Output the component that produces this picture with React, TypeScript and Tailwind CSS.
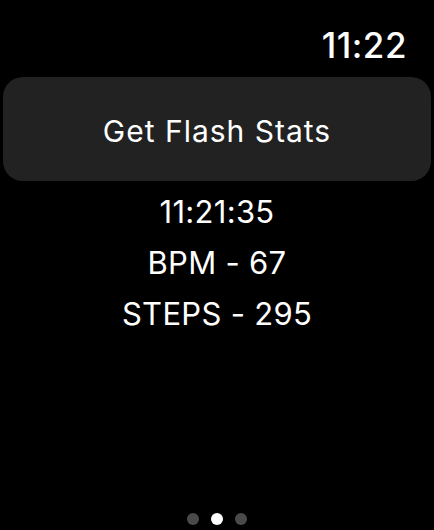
export default function App() {
  return (
    <div
      className="w-[434px] h-[530px] bg-black text-white flex flex-col overflow-hidden"
      style={{ fontFamily: "Inter, 'Noto Sans', sans-serif" }}
    >
      {/* Status bar */}
      <div className="flex justify-end pr-[27px] pt-[25px] h-[77px]">
        <span className="text-[35px] font-medium leading-[40px] tracking-[0.5px]">11:22</span>
      </div>

      {/* Action button */}
      <div className="px-[3px]">
        <button className="w-full h-[104px] rounded-[20px] bg-[#222222] text-[30px] leading-none tracking-[1px] text-white flex items-center justify-center pt-[3px]">
          Get Flash Stats
        </button>
      </div>

      {/* Stats */}
      <div className="flex flex-col items-center mt-[5px] text-[31px] leading-[51px] tracking-[0.3px]">
        <span>11:21:35</span>
        <span>BPM - 67</span>
        <span>STEPS - 295</span>
      </div>

      {/* Page dots */}
      <div className="mt-auto mb-[5px] flex justify-center gap-[12px]">
        <span className="w-[12px] h-[12px] rounded-full bg-[#4a4a4a]" />
        <span className="w-[12px] h-[12px] rounded-full bg-white" />
        <span className="w-[12px] h-[12px] rounded-full bg-[#4a4a4a]" />
      </div>
    </div>
  );
}
